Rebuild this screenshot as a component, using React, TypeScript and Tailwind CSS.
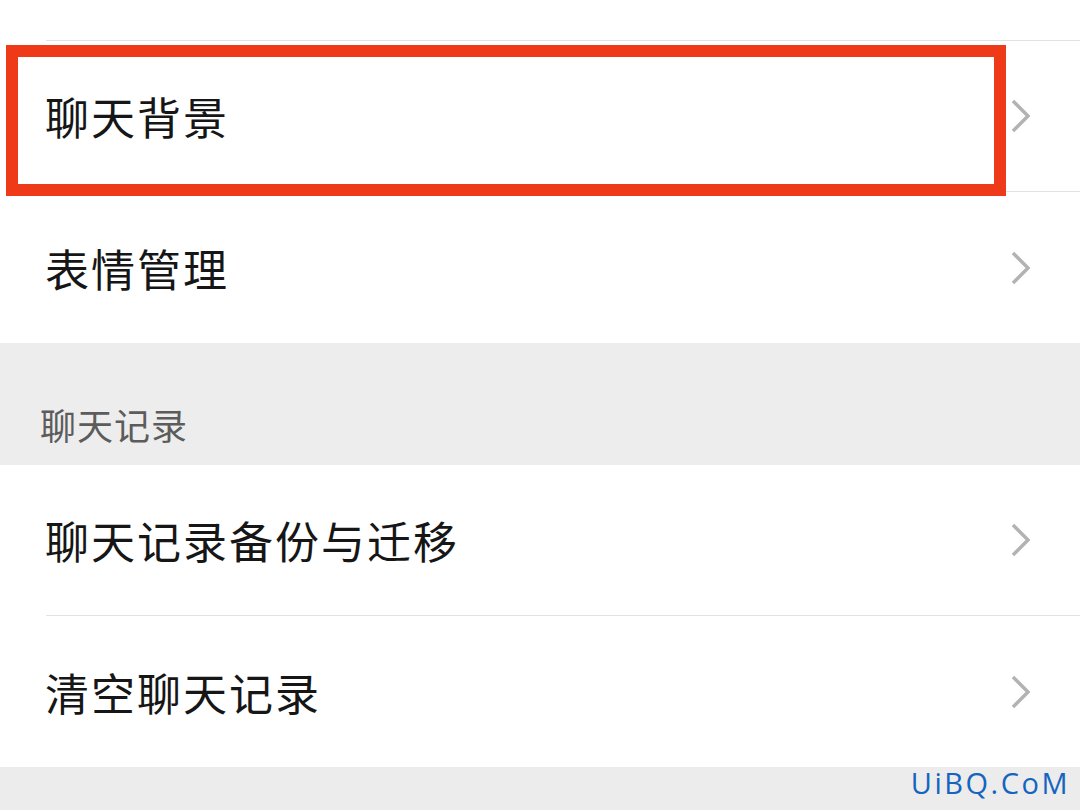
const cjk = '"Noto Sans CJK SC", "Noto Sans", sans-serif';

function Chevron() {
  return (
    <svg width="22" height="34" viewBox="0 0 22 34" className="shrink-0">
      <path d="M3 2 L18 17 L3 32" fill="none" stroke="#b3b3b3" strokeWidth="3.5" strokeLinejoin="miter" />
    </svg>
  );
}

function Row({ label, divider = true }: { label: string; divider?: boolean }) {
  return (
    <div className="bg-white h-[151px] pl-[46px]">
      <div
        className={
          'h-full flex items-center pr-[48px] ' + (divider ? 'border-b border-[#e2e2e2]' : '')
        }
      >
        <span className="flex-1 -ml-px text-[44px] text-[#161616] tracking-[2px]" style={{ fontFamily: cjk }}>
          {label}
        </span>
        <Chevron />
      </div>
    </div>
  );
}

export default function App() {
  return (
    <div className="relative w-[1080px] h-[810px] overflow-hidden bg-white">
      <div className="h-[41px] bg-white border-b border-[#e2e2e2] ml-[46px]" />
      <Row label="聊天背景" />
      <Row label="表情管理" divider={false} />
      <div className="h-[122px] bg-[#ededed] flex items-end pl-[40px] pb-[14px]">
        <span className="text-[36px] text-[#5c5c5c] tracking-[1px]" style={{ fontFamily: cjk }}>
          聊天记录
        </span>
      </div>
      <Row label="聊天记录备份与迁移" />
      <Row label="清空聊天记录" divider={false} />
      <div className="h-[43px] bg-[#ececec] flex justify-end items-start pt-px pr-[10px]">
        <span
          className="text-[29px] leading-none tracking-[2.5px] text-[#1565c0]"
          style={{ fontFamily: '"Open Sans", sans-serif' }}
        >
          UiBQ.CoM
        </span>
      </div>
      {/* highlight box drawn over the first row */}
      <div className="absolute left-[6px] top-[45px] w-[1000px] h-[151px] border-[12px] border-[#ee3a18]" />
    </div>
  );
}
